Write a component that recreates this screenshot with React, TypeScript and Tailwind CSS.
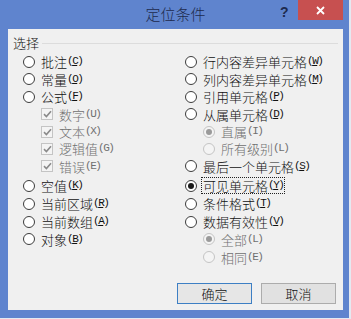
import React from "react";

type Item = {
  text: string;
  key: string;
  sub?: boolean;
  kind?: "radio" | "check";
  checked?: boolean;
  disabled?: boolean;
  focus?: boolean;
};

const leftTop: Item[] = [
  { text: "批注", key: "C" },
  { text: "常量", key: "O" },
  { text: "公式", key: "F" },
  { text: "数字", key: "U", sub: true, kind: "check", checked: true, disabled: true },
  { text: "文本", key: "X", sub: true, kind: "check", checked: true, disabled: true },
  { text: "逻辑值", key: "G", sub: true, kind: "check", checked: true, disabled: true },
  { text: "错误", key: "E", sub: true, kind: "check", checked: true, disabled: true },
];

const leftBottom: Item[] = [
  { text: "空值", key: "K" },
  { text: "当前区域", key: "R" },
  { text: "当前数组", key: "A" },
  { text: "对象", key: "B" },
];

const rightTop: Item[] = [
  { text: "行内容差异单元格", key: "W" },
  { text: "列内容差异单元格", key: "M" },
  { text: "引用单元格", key: "P" },
  { text: "从属单元格", key: "D" },
  { text: "直属", key: "I", sub: true, checked: true, disabled: true },
  { text: "所有级别", key: "L", sub: true, disabled: true },
  { text: "最后一个单元格", key: "S" },
];

const rightBottom: Item[] = [
  { text: "可见单元格", key: "Y", checked: true, focus: true },
  { text: "条件格式", key: "T" },
  { text: "数据有效性", key: "V" },
  { text: "全部", key: "L", sub: true, checked: true, disabled: true },
  { text: "相同", key: "E", sub: true, disabled: true },
];

function Radio({ checked, disabled }: { checked?: boolean; disabled?: boolean }) {
  return (
    <span
      className={`flex h-3 w-3 shrink-0 items-center justify-center rounded-full border ${
        disabled ? "border-[#c4c4c4] bg-[#f4f4f4]" : "border-[#3c3c3c] bg-white"
      }`}
    >
      {checked ? (
        <span className={`h-[6px] w-[6px] rounded-full ${disabled ? "bg-[#9a9a9a]" : "bg-[#1a1a1a]"}`} />
      ) : null}
    </span>
  );
}

function Check() {
  return (
    <span className="flex h-3 w-3 shrink-0 items-center justify-center border border-[#c4c4c4] bg-[#f4f4f4]">
      <svg width="9" height="8" viewBox="0 0 9 8">
        <path d="M1 4.2 L3.4 6.5 L8 1.2" fill="none" stroke="#8a8a8a" strokeWidth="1.6" />
      </svg>
    </span>
  );
}

function Row({ item, h }: { item: Item; h: string }) {
  return (
    <div className={`flex items-center ${h} ${item.sub ? "pl-[18px]" : ""}`}>
      {item.kind === "check" ? <Check /> : <Radio checked={item.checked} disabled={item.disabled} />}
      <span
        className={`ml-[4px] flex items-center px-px leading-[15px] ${
          item.focus ? "border border-dotted border-[#222]" : "border border-transparent"
        } ${item.disabled ? "text-[#6f6f6f]" : "text-[#111]"}`}
      >
        {item.text}
        <span className="font-['Liberation_Mono',monospace] text-[11px] tracking-[-1.5px]">
          (<span className={item.disabled ? "" : "underline underline-offset-1"}>{item.key}</span>)
        </span>
      </span>
    </div>
  );
}

function Column({ top, bottom }: { top: Item[]; bottom: Item[] }) {
  return (
    <div className="flex flex-col">
      {top.map((it, i) => (
        <Row key={i} item={it} h="h-[17.4px]" />
      ))}
      <div className="mt-[2px] flex flex-col">
        {bottom.map((it, i) => (
          <Row key={i} item={it} h="h-[17.8px]" />
        ))}
      </div>
    </div>
  );
}

export default function App() {
  return (
    <div className="h-[319px] w-[351px] bg-[#e4e9f1] font-['Noto_Sans_CJK_SC','Microsoft_YaHei',sans-serif] text-[13px] font-light">
      <div className="flex h-[318px] w-[349px] flex-col bg-[#5f84ce]">
        <div className="relative flex h-[29px] items-center justify-center">
          <span className="pl-[2px] text-[15px] text-[#1d2a4d]">定位条件</span>
          <span className="absolute left-[280px] top-[2px] font-['Liberation_Sans',sans-serif] text-[14px] font-bold text-[#1d2a4d]">
            ?
          </span>
          <div className="absolute left-[298px] top-0 flex h-[20px] w-[45px] items-center justify-center bg-[#c75050]">
            <svg width="9" height="9" viewBox="0 0 9 9">
              <path d="M1 1 L8 8 M8 1 L1 8" stroke="white" strokeWidth="1.8" />
            </svg>
          </div>
        </div>
        <div className="mx-[8px] flex h-[281px] w-[335px] flex-col bg-[#f0f0f0]">
          <div className="mt-[7px] flex h-[14px] items-center pl-[5px] pr-[5px]">
            <span className="text-[#111]">选择</span>
            <div className="ml-[3px] h-px flex-1 bg-[#dcdcdc]" />
          </div>
          <div className="mt-[3.3px] grid grid-cols-[162px_1fr] pl-[15px]">
            <Column top={leftTop} bottom={leftBottom} />
            <Column top={rightTop} bottom={rightBottom} />
          </div>
          <div className="mt-[17px] flex justify-end gap-[9px] pr-[7px]">
            <button className="h-[21px] w-[75px] border border-[#3d7fc4] bg-[#e6e6e6] text-[13px] text-[#111]">
              确定
            </button>
            <button className="h-[21px] w-[75px] border border-[#acacac] bg-[#e1e1e1] text-[13px] text-[#111]">
              取消
            </button>
          </div>
        </div>
      </div>
    </div>
  );
}
